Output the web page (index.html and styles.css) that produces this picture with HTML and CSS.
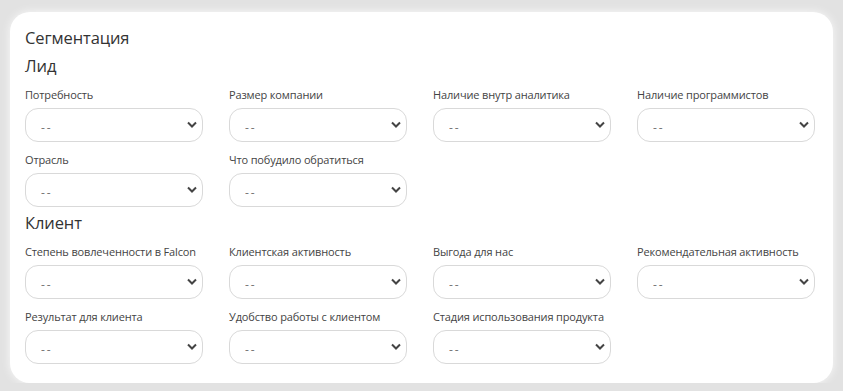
FILE: index.html
```html
<!DOCTYPE html>
<html lang="ru">
<head>
<meta charset="utf-8">
<title>Сегментация</title>
<link rel="stylesheet" href="styles.css">
</head>
<body>
<div class="page">
  <section class="card">
    <h2 class="title">Сегментация</h2>
    <h3 class="group">Лид</h3>
    <div class="grid">
      <div class="field"><label class="label">Потребность</label><div class="sel"><select class="select"><option>--</option></select><svg class="chev" viewBox="0 0 10 6"><path d="M1 1 L5 5 L9 1"/></svg></div></div>
      <div class="field"><label class="label">Размер компании</label><div class="sel"><select class="select"><option>--</option></select><svg class="chev" viewBox="0 0 10 6"><path d="M1 1 L5 5 L9 1"/></svg></div></div>
      <div class="field"><label class="label">Наличие внутр аналитика</label><div class="sel"><select class="select"><option>--</option></select><svg class="chev" viewBox="0 0 10 6"><path d="M1 1 L5 5 L9 1"/></svg></div></div>
      <div class="field"><label class="label">Наличие программистов</label><div class="sel"><select class="select"><option>--</option></select><svg class="chev" viewBox="0 0 10 6"><path d="M1 1 L5 5 L9 1"/></svg></div></div>
      <div class="field"><label class="label">Отрасль</label><div class="sel"><select class="select"><option>--</option></select><svg class="chev" viewBox="0 0 10 6"><path d="M1 1 L5 5 L9 1"/></svg></div></div>
      <div class="field"><label class="label">Что побудило обратиться</label><div class="sel"><select class="select"><option>--</option></select><svg class="chev" viewBox="0 0 10 6"><path d="M1 1 L5 5 L9 1"/></svg></div></div>
    </div>
    <h3 class="group group-next">Клиент</h3>
    <div class="grid">
      <div class="field"><label class="label">Степень вовлеченности в Falcon</label><div class="sel"><select class="select"><option>--</option></select><svg class="chev" viewBox="0 0 10 6"><path d="M1 1 L5 5 L9 1"/></svg></div></div>
      <div class="field"><label class="label">Клиентская активность</label><div class="sel"><select class="select"><option>--</option></select><svg class="chev" viewBox="0 0 10 6"><path d="M1 1 L5 5 L9 1"/></svg></div></div>
      <div class="field"><label class="label">Выгода для нас</label><div class="sel"><select class="select"><option>--</option></select><svg class="chev" viewBox="0 0 10 6"><path d="M1 1 L5 5 L9 1"/></svg></div></div>
      <div class="field"><label class="label">Рекомендательная активность</label><div class="sel"><select class="select"><option>--</option></select><svg class="chev" viewBox="0 0 10 6"><path d="M1 1 L5 5 L9 1"/></svg></div></div>
      <div class="field"><label class="label">Результат для клиента</label><div class="sel"><select class="select"><option>--</option></select><svg class="chev" viewBox="0 0 10 6"><path d="M1 1 L5 5 L9 1"/></svg></div></div>
      <div class="field"><label class="label">Удобство работы с клиентом</label><div class="sel"><select class="select"><option>--</option></select><svg class="chev" viewBox="0 0 10 6"><path d="M1 1 L5 5 L9 1"/></svg></div></div>
      <div class="field"><label class="label">Стадия использования продукта</label><div class="sel"><select class="select"><option>--</option></select><svg class="chev" viewBox="0 0 10 6"><path d="M1 1 L5 5 L9 1"/></svg></div></div>
    </div>
  </section>
</div>
</body>
</html>
```
FILE: styles.css
```css
* { box-sizing: border-box; }
html, body { margin: 0; padding: 0; }
body {
  background: #e2e2e2;
  font-family: "Open Sans", "Noto Sans", sans-serif;
  color: #333;
  overflow: hidden;
}
.page {
  padding: 12px 0 0 10px;
}
.card {
  width: 823px;
  height: 371px;
  background: #fff;
  border-radius: 20px;
  padding: 15px 15px 19px 15px;
  box-shadow: 0 0 10px rgba(255,255,255,0.8);
}
.title, .group {
  margin: 0;
  font-size: 16.5px;
  line-height: 22px;
  font-weight: 400;
  color: #333;
  letter-spacing: -0.1px;
}
.title { margin-bottom: 6px; }
.group { margin-bottom: 10px; }
.group-next { margin-top: 5px; }
.grid {
  display: grid;
  grid-template-columns: repeat(4, 178px);
  column-gap: 26px;
  row-gap: 10px;
}
.field {
  display: flex;
  flex-direction: column;
}
.label {
  font-size: 11px;
  line-height: 16px;
  margin-bottom: 5px;
  color: #444;
  letter-spacing: -0.15px;
  white-space: nowrap;
}
.sel {
  position: relative;
  height: 34px;
}
.select {
  appearance: none;
  -webkit-appearance: none;
  width: 100%;
  height: 34px;
  border: 1px solid #d9d9d9;
  border-radius: 13px;
  background: #fff;
  padding: 4px 30px 0 15px;
  font-family: inherit;
  font-size: 12px;
  letter-spacing: 2px;
  color: #777;
  outline: none;
}
.chev {
  position: absolute;
  right: 6px;
  top: 13px;
  width: 10px;
  height: 7px;
  fill: none;
  stroke: #444;
  stroke-width: 2;
  pointer-events: none;
}
```
